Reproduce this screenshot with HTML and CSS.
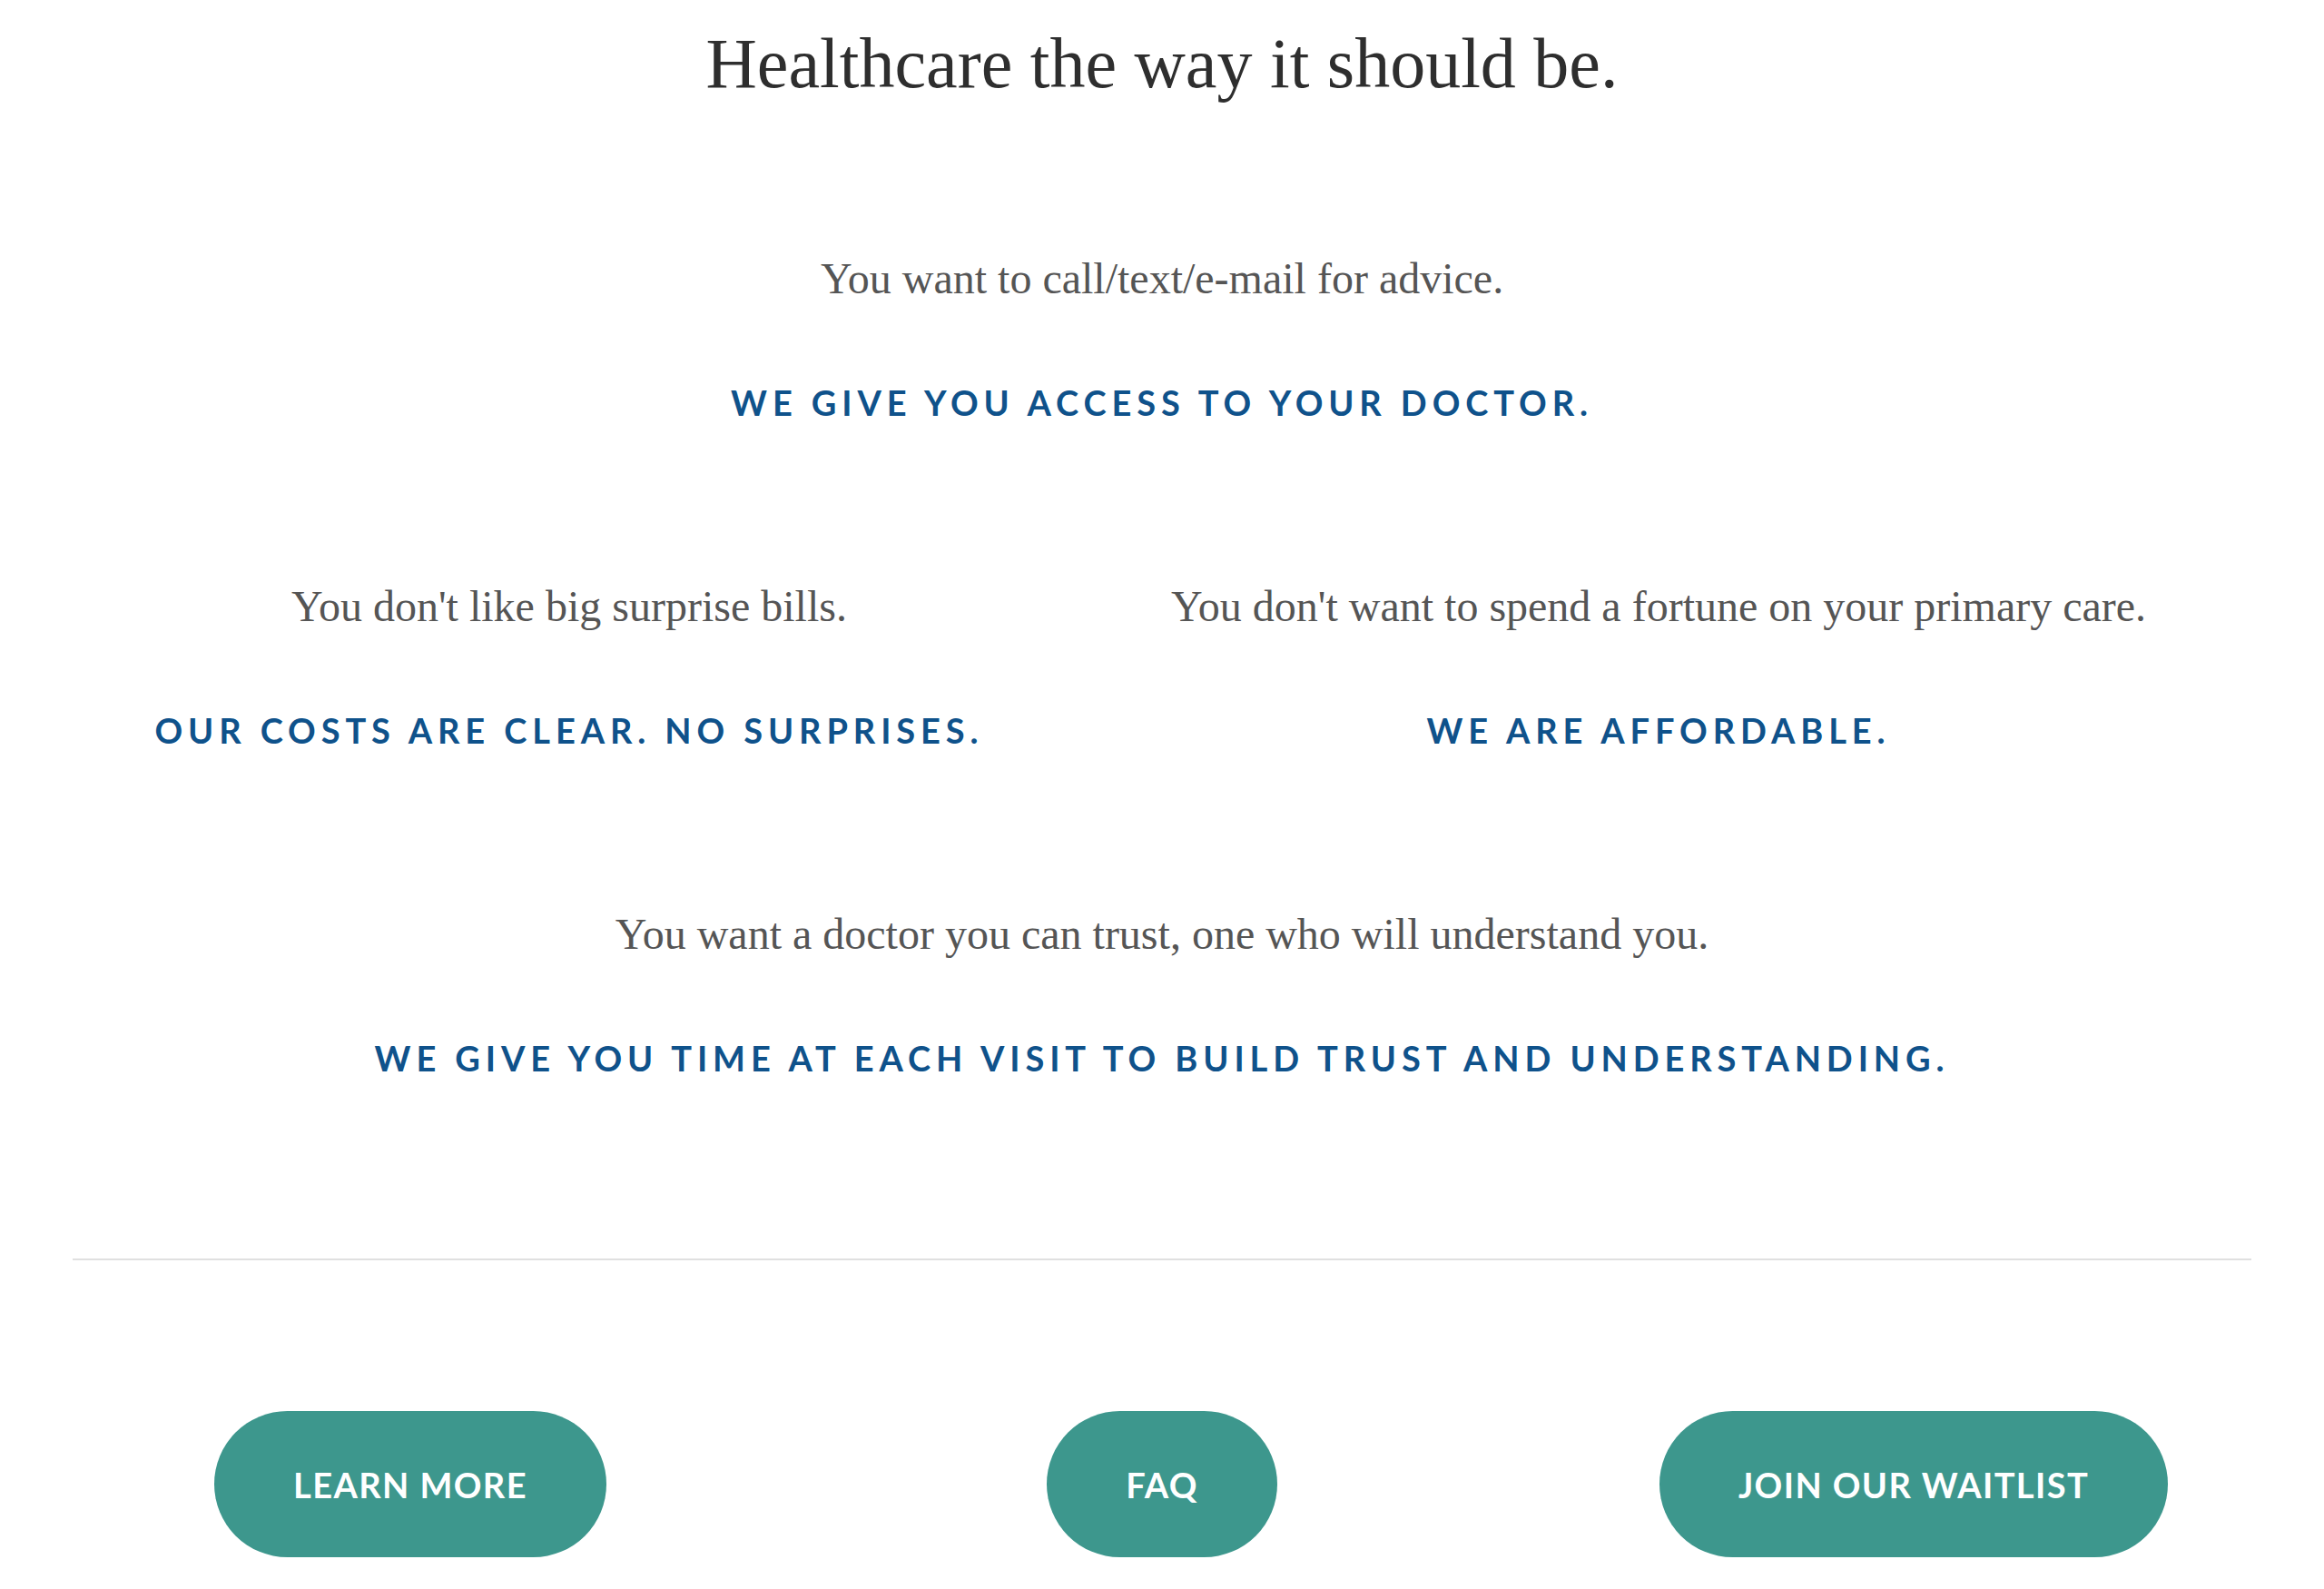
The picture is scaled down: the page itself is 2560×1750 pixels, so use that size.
FILE: index.html
```html
<!DOCTYPE html>
<html lang="en">
<head>
<meta charset="utf-8">
<title>Healthcare the way it should be.</title>
<link rel="stylesheet" href="styles.css">
</head>
<body>
<main class="page">
  <h1 class="title">Healthcare the way it should be.</h1>

  <section class="point">
    <p class="need">You want to call/text/e-mail for advice.</p>
    <p class="answer">We give you access to your doctor.</p>
  </section>

  <div class="pair">
    <section class="point">
      <p class="need">You don't like big surprise bills.</p>
      <p class="answer">Our costs are clear. No surprises.</p>
    </section>
    <section class="point">
      <p class="need">You don't want to spend a fortune on your primary care.</p>
      <p class="answer">We are affordable.</p>
    </section>
  </div>

  <section class="point">
    <p class="need">You want a doctor you can trust, one who will understand you.</p>
    <p class="answer">We give you time at each visit to build trust and understanding.</p>
  </section>

  <hr class="divider">

  <nav class="actions">
    <a class="btn" href="#">Learn more</a>
    <a class="btn" href="#">FAQ</a>
    <a class="btn" href="#">Join our waitlist</a>
  </nav>
</main>
</body>
</html>
```

FILE: styles.css
```css
html, body {
  margin: 0;
  padding: 0;
  background: #ffffff;
}

.page {
  padding: 23px 80px 0;
  display: flex;
  flex-direction: column;
}

.title {
  margin: 0;
  font-family: "Liberation Serif", "Times New Roman", serif;
  font-weight: 400;
  font-size: 78px;
  line-height: 94px;
  color: #2e2e2e;
  text-align: center;
}

.point {
  margin-top: 170px;
  text-align: center;
  display: flex;
  flex-direction: column;
  gap: 81px;
}

.title + .point {
  margin-top: 160px;
}

.need {
  margin: 0;
  font-family: "Liberation Serif", "Times New Roman", serif;
  font-size: 48px;
  line-height: 60px;
  color: #555555;
  white-space: nowrap;
}

.answer {
  margin: 0;
  font-family: Lato, "Open Sans", sans-serif;
  font-weight: 700;
  font-size: 38px;
  line-height: 50px;
  letter-spacing: 5.9px;
  text-transform: uppercase;
  color: #0f528b;
  white-space: nowrap;
}

.pair {
  display: grid;
  grid-template-columns: 1fr 1fr;
  margin: 0 53px 0 -53px;
}

.divider {
  margin: 196px 0 0;
  border: 0;
  border-top: 2px solid #e0e0e0;
  height: 0;
}

.actions {
  margin-top: 166px;
  display: grid;
  grid-template-columns: repeat(3, 1fr);
  column-gap: 84px;
  justify-items: center;
}

.btn {
  display: flex;
  align-items: center;
  justify-content: center;
  height: 161px;
  padding: 0 87px;
  border-radius: 81px;
  background: #3d978d;
  color: #ffffff;
  font-family: Lato, "Open Sans", sans-serif;
  font-weight: 700;
  font-size: 38px;
  letter-spacing: 1.4px;
  text-transform: uppercase;
  text-decoration: none;
  white-space: nowrap;
}
```
